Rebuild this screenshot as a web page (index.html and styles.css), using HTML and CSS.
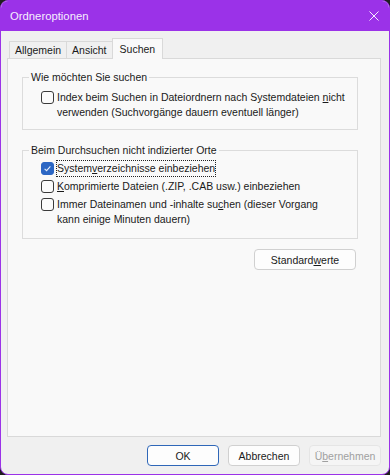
FILE: index.html
```html
<!DOCTYPE html>
<html lang="de">

<head>
    <meta charset="UTF-8">
    <meta name="viewport" content="width=device-width, initial-scale=1.0">
    <title>Ordneroptionen</title>
    <link rel="stylesheet" href="styles.css">
</head>

<body>
    <div class="window">
        <div class="titlebar">
            <span class="title">Ordneroptionen</span>
            <svg class="close" width="10" height="10" viewBox="0 0 10 10">
                <path d="M0.5 0.5 L9.5 9.5 M9.5 0.5 L0.5 9.5" stroke="#f6eefd" stroke-width="1" fill="none" />
            </svg>
        </div>

        <div class="content">
            <div class="tabs">
                <div class="tab">Allgemein</div>
                <div class="tab">Ansicht</div>
                <div class="tab active">Suchen</div>
            </div>

            <div class="panel">
                <fieldset class="group">
                    <legend>Wie möchten Sie suchen</legend>
                    <div class="options first">
                        <label class="option">
                            <span class="box"></span>
                            <span class="text">Index beim Suchen in Dateiordnern nach Systemdateien <u>n</u>icht<br>verwenden (Suchvorgänge dauern eventuell länger)</span>
                        </label>
                    </div>
                </fieldset>

                <fieldset class="group">
                    <legend>Beim Durchsuchen nicht indizierter Orte</legend>
                    <div class="options second">
                        <label class="option">
                            <span class="box checked">
                                <svg width="11" height="11" viewBox="0 0 11 11">
                                    <path d="M2.6 5.8 L4.6 7.7 L8.4 3.4" stroke="#e4edfa" stroke-width="1.1" fill="none" />
                                </svg>
                            </span>
                            <span class="text focus">System<u>v</u>erzeichnisse einbeziehen</span>
                        </label>
                        <label class="option">
                            <span class="box"></span>
                            <span class="text"><u>K</u>omprimierte Dateien (.ZIP, .CAB usw.) einbeziehen</span>
                        </label>
                        <label class="option">
                            <span class="box"></span>
                            <span class="text">Immer Dateinamen und -inhalte su<u>c</u>hen (dieser Vorgang<br>kann einige Minuten dauern)</span>
                        </label>
                    </div>
                </fieldset>

                <div class="panel-actions">
                    <button class="btn wide">Standard<u>w</u>erte</button>
                </div>
            </div>

            <div class="dialog-actions">
                <button class="btn default">OK</button>
                <button class="btn">Abbrechen</button>
                <button class="btn" disabled>Ü<u>b</u>ernehmen</button>
            </div>
        </div>
    </div>
</body>

</html>
```

FILE: styles.css
```css
* {
    box-sizing: border-box;
}

body {
    margin: 0;
    background-color: #1f1f1f;
    font-family: "Segoe UI", "Liberation Sans", Arial, sans-serif;
    font-size: 10.5px;
    color: #1a1a1a;
}

.window {
    width: 390px;
    height: 475px;
    border: 1px solid #9b32e8;
    border-radius: 8px;
    background-color: #f0f0f0;
    overflow: hidden;
    display: flex;
    flex-direction: column;
}

/* Title bar */
.titlebar {
    flex: none;
    height: 30px;
    background-color: #9b32e8;
    display: flex;
    align-items: center;
    justify-content: space-between;
    padding: 0 10px 0 9px;
    color: #f6eefd;
    font-size: 11.3px;
}

.close {
    display: block;
    margin-top: -1px;
}

.content {
    flex: 1;
    display: flex;
    flex-direction: column;
    padding: 7px 8px 0 6px;
}

/* Tabs */
.tabs {
    display: flex;
    align-items: flex-end;
    height: 20px;
    padding-left: 2px;
}

.tab {
    height: 17px;
    line-height: 16px;
    padding: 0 5px;
    border: 1px solid #d9d9d9;
    border-bottom: none;
    background-color: #f0f0f0;
}

.tab + .tab {
    margin-left: -1px;
}

.tab.active {
    height: 21px;
    margin-bottom: -1px;
    padding: 2px 7px 0;
    background-color: #f9f9f9;
    position: relative;
    z-index: 1;
}

.panel {
    height: 379px;
    border: 1px solid #d9d9d9;
    background-color: #f9f9f9;
    padding: 11px 22px 0 14px;
}

/* Group boxes */
.group {
    margin: 0;
    padding: 0 0 0 6px;
    border: 1px solid #dcdcdc;
    min-width: 0;
}

.group + .group {
    margin-top: 13px;
}

.group legend {
    padding: 0 2px;
    line-height: 15px;
}

.options {
    display: flex;
    flex-direction: column;
    gap: 3px;
    padding-left: 12px;
}

.options.first {
    padding-top: 5px;
    padding-bottom: 9px;
}

.options.second {
    padding-top: 3px;
    padding-bottom: 11px;
}

.option {
    display: flex;
    align-items: flex-start;
    gap: 3px;
    line-height: 15px;
}

.box {
    flex: none;
    width: 13px;
    height: 13px;
    margin-top: 1px;
    border: 1px solid #3a3a3a;
    border-radius: 3px;
    background-color: #fbfbfb;
}

.box.checked {
    background-color: #2c67c4;
    border-color: #2c67c4;
}

.box svg {
    display: block;
}

.focus {
    outline: 1px dotted #222;
}

u {
    text-decoration-thickness: 1px;
    text-underline-offset: 1px;
}

/* Buttons */
.panel-actions {
    display: flex;
    justify-content: flex-end;
    margin-top: 10px;
    padding-right: 2px;
}

.dialog-actions {
    display: flex;
    justify-content: flex-end;
    gap: 9px;
    margin-top: 8px;
}

.btn {
    width: 72px;
    height: 21px;
    padding: 0;
    font: inherit;
    color: #1a1a1a;
    background-color: #fdfdfd;
    border: 1px solid #d0d0d0;
    border-radius: 4px;
}

.btn.wide {
    width: 102px;
}

.btn.default {
    border-color: #2f67b8;
}

.btn:disabled {
    color: #a0a0a0;
    background-color: #f5f5f5;
    border-color: #e5e5e5;
}
```
